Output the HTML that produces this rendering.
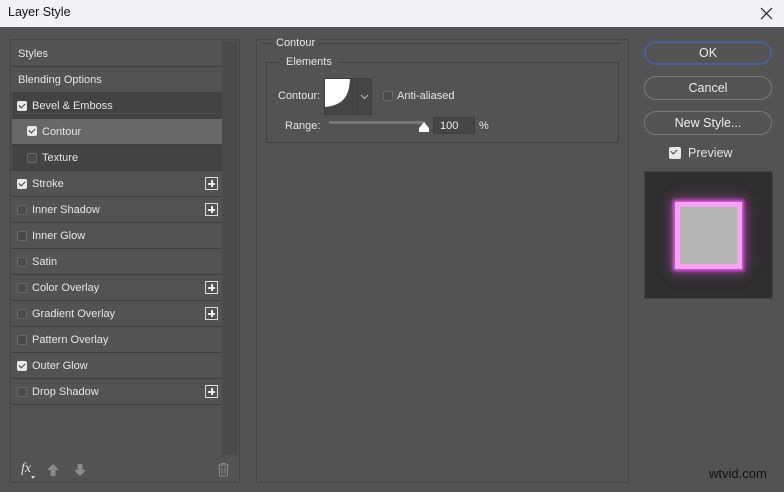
<!DOCTYPE html>
<html><head><style>
*{margin:0;padding:0;box-sizing:border-box}
body{width:784px;height:492px;background:#535353;font-family:"Liberation Sans",Arial,sans-serif;font-size:11px;color:#e6e6e6;position:relative;overflow:hidden}
.a{position:absolute}
.title{left:0;top:0;width:784px;height:27px;background:#f3f2f7;color:#111;font-size:12.5px;padding:5px 0 0 8px}
.row{position:absolute;left:12px;width:210px;height:26px;border-bottom:1px solid #3e3e3e;line-height:27px}
.cb{position:absolute;width:10px;height:10px;border:1px solid #6a6a6a;border-radius:2px;background:#4a4a4a}
.cb.on{background:#e8e8e8;border-color:#e8e8e8}
.cb.on:after{content:"";position:absolute;left:2px;top:0px;width:3px;height:5px;border:solid #333;border-width:0 1.5px 1.5px 0;transform:rotate(45deg)}
.plus{position:absolute;left:193px;top:6px;width:13px;height:13px;border:1px solid #ddd}
.plus:before{content:"";position:absolute;left:2px;top:5px;width:7px;height:1.5px;background:#eee}
.plus:after{content:"";position:absolute;left:5px;top:2px;width:1.5px;height:7px;background:#eee}
.btn{position:absolute;left:644px;width:128px;height:24px;border:1px solid #7a7a7a;border-radius:12px;text-align:center;line-height:22px;font-size:12.5px;color:#eee}
</style></head><body>
<div class="a title">Layer Style</div>
<svg class="a" style="left:760px;top:7px" width="13" height="13"><path d="M1 1L12 12M12 1L1 12" stroke="#222" stroke-width="1.2"/></svg>

<div class="a" style="left:10px;top:39px;width:230px;height:444px;border:1px solid #444"></div>
<div class="a" style="left:222px;top:41px;width:16px;height:414px;background:#4a4a4a"></div>

<div class="row" style="top:41px;padding-left:6px">Styles</div>
<div class="row" style="top:67px;padding-left:6px">Blending Options</div>
<div class="row" style="top:93px;background:#434343;padding-left:20px"><span class="cb on" style="left:5px;top:8px"></span>Bevel &amp; Emboss</div>
<div class="row" style="top:119px;background:#686868;padding-left:30px"><span class="cb on" style="left:15px;top:7px"></span>Contour</div>
<div class="row" style="top:145px;background:#434343;padding-left:30px"><span class="cb" style="left:15px;top:8px"></span>Texture</div>
<div class="row" style="top:171px;padding-left:20px"><span class="cb on" style="left:5px;top:8px"></span>Stroke<span class="plus"></span></div>
<div class="row" style="top:197px;padding-left:20px"><span class="cb" style="left:5px;top:8px"></span>Inner Shadow<span class="plus"></span></div>
<div class="row" style="top:223px;padding-left:20px"><span class="cb" style="left:5px;top:8px"></span>Inner Glow</div>
<div class="row" style="top:249px;padding-left:20px"><span class="cb" style="left:5px;top:8px"></span>Satin</div>
<div class="row" style="top:275px;padding-left:20px"><span class="cb" style="left:5px;top:8px"></span>Color Overlay<span class="plus"></span></div>
<div class="row" style="top:301px;padding-left:20px"><span class="cb" style="left:5px;top:8px"></span>Gradient Overlay<span class="plus"></span></div>
<div class="row" style="top:327px;padding-left:20px"><span class="cb" style="left:5px;top:8px"></span>Pattern Overlay</div>
<div class="row" style="top:353px;padding-left:20px"><span class="cb on" style="left:5px;top:8px"></span>Outer Glow</div>
<div class="row" style="top:379px;padding-left:20px"><span class="cb" style="left:5px;top:8px"></span>Drop Shadow<span class="plus"></span></div>

<div class="a" style="left:21px;top:461px;font-style:italic;font-size:14px;color:#ddd;font-family:'Liberation Serif',serif">fx</div>
<div class="a" style="left:31px;top:476px;width:0;height:0;border:2px solid transparent;border-top:3px solid #ddd"></div>
<svg class="a" style="left:46px;top:463px" width="14" height="14"><path d="M7 1L13 7H9.5V13H4.5V7H1Z" fill="#8a8a8a"/></svg>
<svg class="a" style="left:73px;top:463px" width="14" height="14"><path d="M7 13L13 7H9.5V1H4.5V7H1Z" fill="#8a8a8a"/></svg>
<svg class="a" style="left:217px;top:462px" width="13" height="15"><path d="M1 3H12M4.5 3V1.5H8.5V3M2.5 3.5V14H10.5V3.5M5 5.5V12M8 5.5V12" stroke="#8a8a8a" fill="none" stroke-width="1"/></svg>

<div class="a" style="left:256px;top:39px;width:373px;height:444px;border:1px solid #444"></div>
<div class="a" style="left:262px;width:360px;height:1px;background:#404040;top:43px"></div>
<div class="a" style="left:272px;top:37px;background:#535353;padding:0 4px">Contour</div>
<div class="a" style="left:266px;top:62px;width:353px;height:81px;border:1px solid #404040"></div>
<div class="a" style="left:280px;top:56px;background:#535353;padding:0 6px">Elements</div>
<div class="a" style="left:278px;top:90px">Contour:</div>
<div class="a" style="left:324px;top:78px;width:48px;height:37px;border:1px solid #3e3e3e;background:#454545"></div>
<svg class="a" style="left:325px;top:79px" width="32" height="35"><path d="M0 0H25C24 18 18 26 0 28Z" fill="#fff"/></svg>
<div class="a" style="left:357px;top:79px;width:1px;height:35px;background:#3e3e3e"></div>
<svg class="a" style="left:360px;top:94px" width="9" height="6"><path d="M1 1L4.5 4.5L8 1" stroke="#bbb" fill="none"/></svg>
<span class="cb a" style="left:383px;top:91px"></span>
<div class="a" style="left:397px;top:90px">Anti-aliased</div>
<div class="a" style="left:285px;top:120px">Range:</div>
<div class="a" style="left:329px;top:121px;width:96px;height:3px;background:#777;border-radius:1px"></div>
<svg class="a" style="left:418px;top:121px" width="12" height="12"><path d="M6 1L11 7V11H1V7Z" fill="#fff"/></svg>
<div class="a" style="left:433px;top:117px;width:42px;height:17px;background:#454545;border:1px solid #3e3e3e;padding:2px 0 0 6px;color:#eee">100</div>
<div class="a" style="left:479px;top:120px">%</div>

<div class="btn" style="top:41px;border:2px solid #4a6090;line-height:20px">OK</div>
<div class="btn" style="top:76px">Cancel</div>
<div class="btn" style="top:111px">New Style...</div>
<span class="cb on a" style="left:669px;top:147px;width:12px;height:12px"></span>
<div class="a" style="left:688px;top:146px;font-size:12.5px">Preview</div>
<div class="a" style="left:644px;top:171px;width:129px;height:128px;background:#2f2f2f;border:1px solid #444"></div>
<div class="a" style="left:675px;top:202px;width:67px;height:67px;background:#b5b5b5;border:5px solid #f6a3f2;box-shadow:0 0 3px 2px #e050e0,0 0 12px 3px rgba(230,100,230,.5)"></div>

<div class="a" style="left:709px;top:466px;font-size:13px;color:#111">wtvid.com</div>
</body></html>
